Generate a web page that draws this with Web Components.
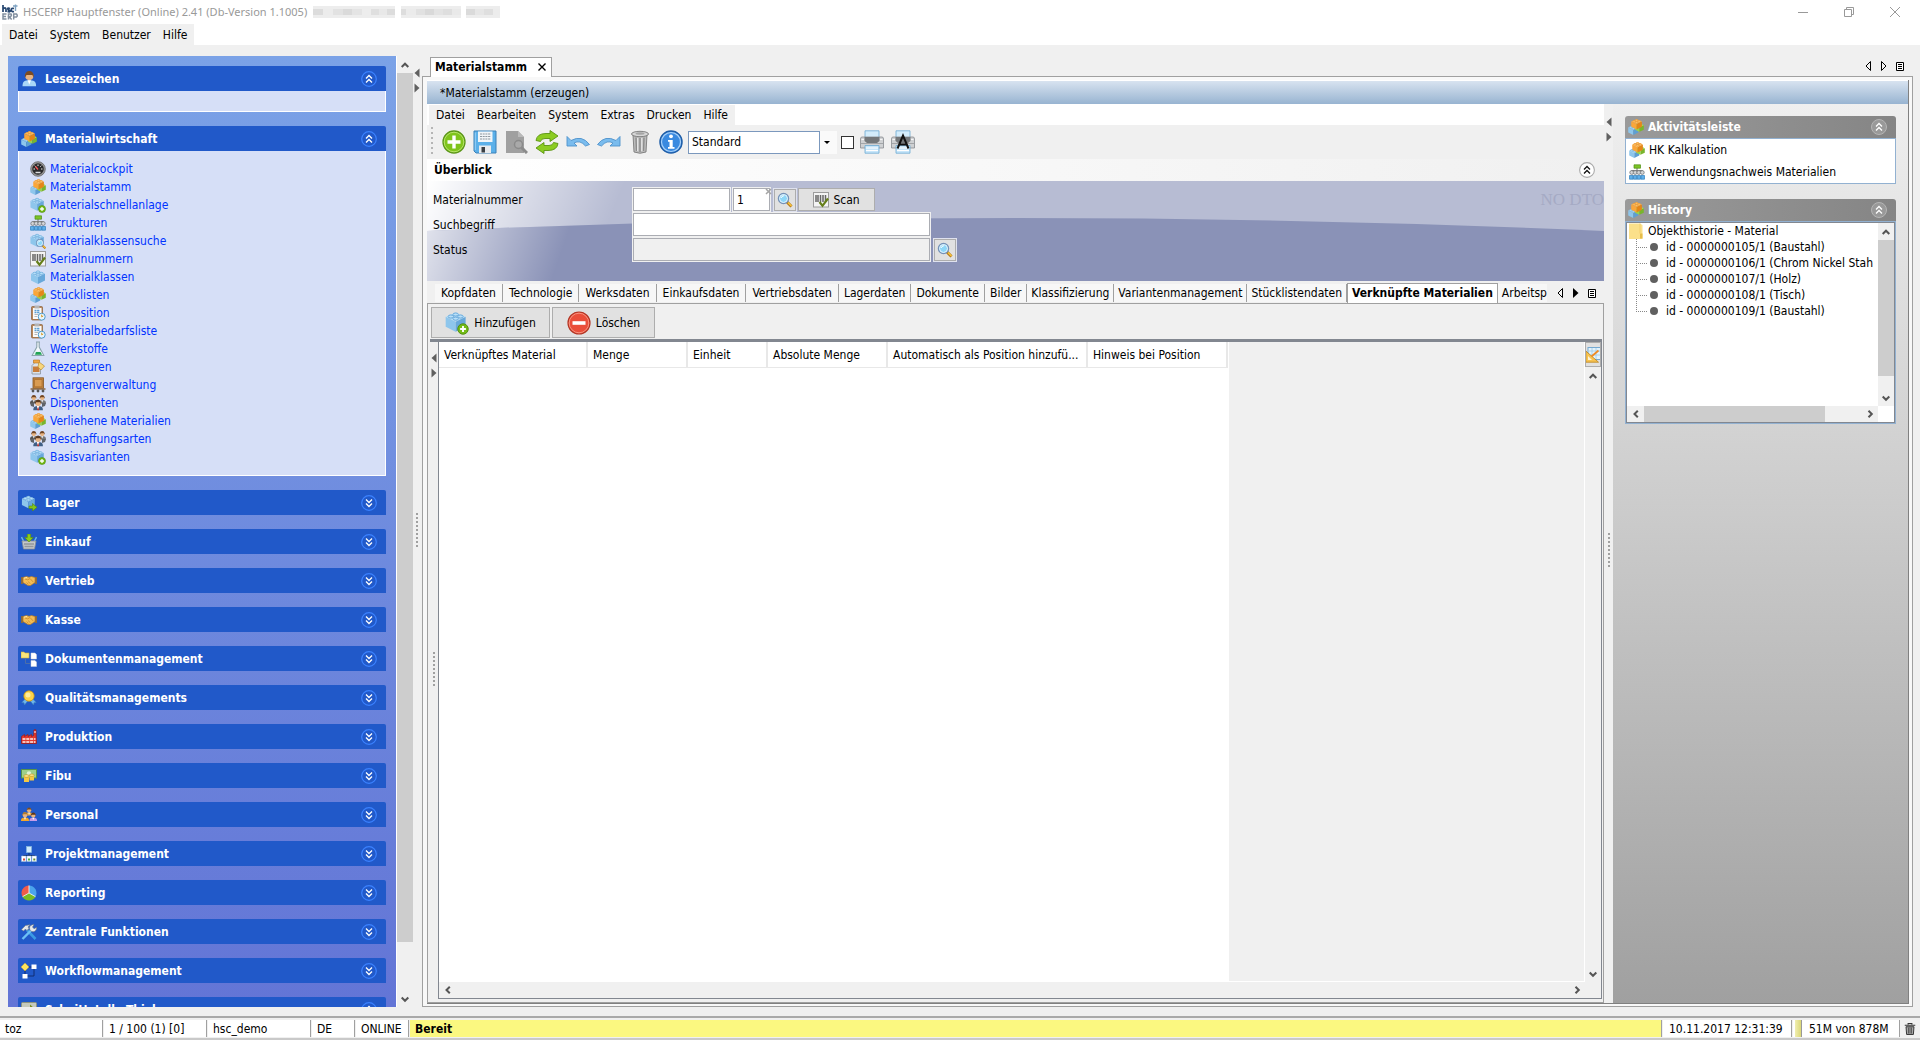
<!DOCTYPE html>
<html lang="de">
<head>
<meta charset="utf-8">
<title>HSCERP Hauptfenster</title>
<style>
html, body { margin: 0; height: 100%; }
body { font: 12px/16px "DejaVu Sans Condensed", "DejaVu Sans", sans-serif; color: #000; background: #f0f0f0; overflow: hidden; }
</style>
</head>
<body>
<erp-app></erp-app>
<script>
const brick = (t, l, r, x, y, s) => `<g transform="translate(${x} ${y}) scale(${s})">
<path d="M8 1.500 15 4.500 8 8 1 4.500Z" fill="${t}"/><path d="M1 4.500 8 8V15L1 11.500Z" fill="${l}"/><path d="M15 4.500 8 8V15L15 11.500Z" fill="${r}"/>
<ellipse cx="8" cy="3" rx="1.900" ry="1.100" fill="${t}" stroke="${r}" stroke-width=".7"/><ellipse cx="4.600" cy="4.400" rx="1.900" ry="1.100" fill="${t}" stroke="${r}" stroke-width=".7"/><ellipse cx="11.400" cy="4.400" rx="1.900" ry="1.100" fill="${t}" stroke="${r}" stroke-width=".7"/><ellipse cx="8" cy="5.900" rx="1.900" ry="1.100" fill="${t}" stroke="${r}" stroke-width=".7"/></g>`;
const blue = (x = 0, y = 0, s = 1) => brick('#b9e0f8', '#8ec6ec', '#68a8da', x, y, s);
const plus = (x, y, r) => `<circle cx="${x}" cy="${y}" r="${r}" fill="#74bb17" stroke="#4b8a0c" stroke-width="${r / 6}"/><path d="M${x - r * .55} ${y}H${x + r * .55}M${x} ${y - r * .55}V${y + r * .55}" stroke="#fff" stroke-width="${r * .36}"/>`;
const man = (x, y, hair, coat, s) => `<g transform="translate(${x} ${y}) scale(${s})"><path d="M0 9C0 6 1.500 5.500 4 5.500S8 6 8 9Z" fill="${coat}"/><circle cx="4" cy="3" r="2.400" fill="#e7b483"/><path d="M1.400 4V2.400Q2 0 4 0T6.600 2.400V4L5.800 2.300H2.400Z" fill="${hair}"/><path d="M3 5.500H5L4 8Z" fill="#fff"/></g>`;
const lens = (x, y, s) => `<g transform="translate(${x} ${y}) scale(${s})"><path d="m9.500 9.500 5 5" stroke="#b27718" stroke-width="3"/><path d="m11 10.500 3.500 3.500" stroke="#f8c63c" stroke-width="1.500"/><circle cx="6.500" cy="6.500" r="5" fill="#8ed6f7" stroke="#7592b8" stroke-width="1.500"/><circle cx="6.500" cy="6.500" r="4" fill="none" stroke="#e9f7fe"/><path d="M4 6Q4.500 4 7 3.700" stroke="#fff" fill="none"/></g>`;
const clip = `<rect x="1.500" y="1.500" width="11" height="13.500" rx="1" fill="#b8865a" stroke="#8a6038" stroke-width=".7"/><rect x="3" y="3" width="8.500" height="11" fill="#fbfbfb"/><rect x="4.500" y=".5" width="5" height="3" fill="#b5b5b5"/><path d="M4.500 5.500H10M4.500 7.500H10" stroke="#5d9fd4" stroke-width="1.300" stroke-dasharray="2 .6"/><path d="M4.500 9.500H8M4.500 11.500H7" stroke="#aaa" stroke-width=".8"/><circle cx="11.700" cy="11.700" r="3.500" fill="#e9f5fc" stroke="#4d9aca"/><path d="M11.700 9.700V11.900L13.200 11" fill="none" stroke="#d79b25"/>`;
const group = `${man(0, 0, '#6f4423', '#555', .95)}${man(8.400, 0, '#6f4423', '#777', .95)}<path d="M0 8H4V12L1 11ZM12 8H16L15 11 12 12Z" fill="#5f6368"/>${man(3.300, 4.500, '#5b3a20', '#3f5f85', 1.200)}<path d="M6.800 11H9.300L8.100 15.500Z" fill="#fff"/><path d="m8.100 11.500.8 3-.8 1.200-.8-1.200Z" fill="#c92c22"/>`;
const shake = `<path d="M0 4H2V11H0ZM14 4H16V11H14Z" fill="#8b6a3e"/><path d="M2 4.500 5.500 3.500 8 4.300 10.500 3.500 14 4.500V9.500L9.500 12.500H7L2 9.500Z" fill="#f4bd55" stroke="#b77a25" stroke-width=".7"/><path d="M4 6Q7 8 9 5.500L12.500 9.300M5.500 9.500 7.500 11.300M7 8.500 9.500 10.800" fill="none" stroke="#c98a30" stroke-width=".8"/><path d="M3 5.200 6 4.400" stroke="#fde5a6"/>`;
const tree = `<path d="M8 4V8M2.500 8V6.500H13.500V8" fill="none" stroke="#777"/><path d="M5 .8H11.500V4.200H5Z" fill="#7cc427" stroke="#4f8e12" stroke-width=".7"/><g fill="#d4d6d8" stroke="#74787c" stroke-width=".8"><circle cx="2.700" cy="8.500" r="1.900"/><circle cx="6.200" cy="8.500" r="1.900"/><circle cx="9.800" cy="8.500" r="1.900"/><circle cx="13.300" cy="8.500" r="1.900"/></g><g fill="#5eaee8" stroke="#2e7fbd" stroke-width=".7"><path d="M.5 11.500H4V15.200H.5ZM4.500 11.500H7.800V15.200H4.500ZM8.200 11.500H11.500V15.200H8.200ZM12 11.500H15.500V15.200H12Z"/></g>`;
const bricks = `${brick('#b9e0f8', '#8ec6ec', '#5e9fd2', -.5, 5.200, .72)}${brick('#c9ec7b', '#9bd447', '#79b52d', 6.500, 3.500, .62)}${brick('#ffcb78', '#faa63a', '#e48619', 2.500, -1, .76)}`;
const barcode = `<rect x=".5" y=".5" width="15" height="14.500" fill="#f4f4f4" stroke="#9c9c9c"/><path d="M3 3V10M5 3V10M7.500 3V10M10 3V10M12.500 3V10" stroke="#666" stroke-width="1.500"/><path d="M6.500 10 9.500 13.800 15 6.500" fill="none" stroke="#667f1a" stroke-width="2.200"/>`;
const printer = `<path d="M5 .8H19V8H5Z" fill="#d3ecfb" stroke="#6ca9d2" stroke-width=".8"/><path d="M2 7H22Q23.500 7 23.500 9V18H.5V9Q.5 7 2 7Z" fill="#cfd1d3" stroke="#888c90" stroke-width=".8"/><path d="M4.500 7H19.500V11L17 13H7L4.500 11Z" fill="#73777a"/><path d="M1 13.500H23" stroke="#a2a5a8"/><path d="M1.500 9.500H4M20 9.500H22.500" stroke="#f5f5f5"/><path d="M5 15.500H19V23.200H5Z" fill="#c8e6fa" stroke="#6ca9d2" stroke-width=".8"/><path d="M6 18H18M6 20.500H18" stroke="#fff"/>`;
const chev = (d, c) => `<path d="${d === 'up' ? 'm5 7.500 3-3 3 3M5 11.500l3-3 3 3' : 'm5 4.500 3 3 3-3M5 8.500l3 3 3-3'}" fill="none" stroke="${c}" stroke-width="1.300"/>`;
const ICONS = {
 logo: [16, `<rect width="16" height="16" fill="#fff"/><path d="M1 1V8M1.500 4.500Q4 3 4 5.500V8M8 4.500Q5.500 3.500 5.800 5T8.200 6.500Q8.500 8.500 5.500 7.500M12 4.500Q9 3.800 9.300 6T12 7.500" fill="none" stroke="#25456f" stroke-width="1.700"/><path d="M11 2H15.500M13.500 .5V7" stroke="#7fa3c2" stroke-width="1.400"/><path d="M4.500 10H1V15H4.500M1 12.500H4M6.500 15.500V10H9Q10 11.500 8.500 12.700H7L9.700 15.500M11.700 15.500V10H14.500Q16 11.800 14.500 13H12" fill="none" stroke="#8390a0" stroke-width="1.500"/>`],
 user: [16, man(1.500, 0, '#7b4b22', '#a9d6f7', 1.700)],
 bricks: [16, bricks],
 gauge: [16, `<circle cx="8" cy="8" r="7.300" fill="#999" stroke="#666" stroke-width=".8"/><circle cx="8" cy="8" r="5.800" fill="#2b2b2b"/><path d="M3.500 8H5M4.700 4.700 5.700 5.700M8 3.500V5M11.300 4.700 10.300 5.700M12.500 8H11" stroke="#eee"/><path d="M8 8.500 5.500 5.500" stroke="#f55" stroke-width="1.200"/><path d="M5.500 11.500H10.500" stroke="#ddd" stroke-width="1.500"/>`],
 brickadd: [16, blue(-.5, -.5, .95) + plus(12, 12, 3.500)],
 bricksearch: [16, blue(-.5, -.5, .95) + lens(5.500, 5.500, .68)],
 tree: [16, tree], barcode: [16, barcode], brick: [16, blue()], clip: [16, clip],
 flask: [16, `<path d="M6 1H10M6.800 1V6L2.200 14.500H13.800L9.200 6V1" fill="#f2f8fb" stroke="#8ca3ad" stroke-width="1.100"/><path d="M5 10.500H11L13 14H3Z" fill="#dceef0"/><path d="M6 11H10.500L12 13.800H5Z" fill="#23a455"/>`],
 bottle: [16, `<path d="M4 1.500H9V4.500L10.500 6.500V15H2V6.500L4 4.500Z" fill="#dde3e8" stroke="#8a929a" stroke-width=".8"/><path d="M3.500 1H9.500V4H3.500Z" fill="#efa745" stroke="#bb761e" stroke-width=".6"/><path d="M3 7.500H9.500V13H3Z" fill="#c97d3a"/><path d="M9 3 14.500 7 11 11 8 8Z" fill="#f8d67c" stroke="#b98c35" stroke-width=".7"/>`],
 crate: [16, `<rect x="3" y=".8" width="10.500" height="10.500" fill="#c1843f" stroke="#875622" stroke-width=".8"/><path d="M4.500 2.500H12V9.800H4.500Z" fill="#d99b52" stroke="#a66b2c" stroke-width=".7"/><path d="M.5 12H15.500" stroke="#8f6a43" stroke-width="1.500"/><circle cx="3" cy="14" r="1.400" fill="#555"/><circle cx="8" cy="14" r="1.400" fill="#555"/><circle cx="13" cy="14" r="1.400" fill="#555"/>`],
 people: [16, group],
 brickgo: [16, blue(0, -.5, .92) + `<path d="M8 11H11.500V8.500L16 12.300 11.500 16V13.500H8Z" fill="#84c51b" stroke="#55880d" stroke-width=".6"/>`],
 basket: [16, `<path d="M.5 3 3 8M15.500 3 13 8" stroke="#67b5e4" stroke-width="1.500"/><path d="M1 7H15L13.500 15H2.500Z" fill="#c3c7ca" stroke="#8b9094" stroke-width=".8"/><path d="M3 10H13M3.500 12.500H12.500" stroke="#92979b" stroke-width="1.500"/><path d="M6.300 0H9.700V3.500H12.300L8 8 3.700 3.500H6.300Z" fill="#8dcc1c" stroke="#578c0a" stroke-width=".6"/>`],
 shake: [16, shake],
 docs: [16, `<path d="M0 1H3L4 2H8V7H0Z" fill="#fbe57b" stroke="#cfae3c" stroke-width=".6"/><path d="M4.500 8V12.500H9M8.500 5.500H9.500" fill="none" stroke="#4c6ea8"/><path d="M10 2H14L15.500 3.500V8H10ZM10 9.500H14L15.500 11V15.500H10Z" fill="#fff" stroke="#cdd3dc" stroke-width=".5"/>`],
 medal: [16, `<path d="M5 8 .8 12.500 3 12.800 3.500 15 7.500 10ZM11 8 15.200 12.500 13 12.800 12.500 15 8.500 10Z" fill="#6db4ec" stroke="#3c80c0" stroke-width=".6"/><circle cx="8" cy="6" r="5.200" fill="#fbd34a" stroke="#c99516" stroke-width=".8"/><circle cx="7" cy="5" r="2.500" fill="#fdec9d"/>`],
 factory: [16, `<path d="M.5 14.500V7.500L3.500 5.500V7.500L7 5.500V7.500L10.500 5.500V7.500L12.700 6.500 13 .8H15L15.500 14.500Z" fill="#e33a2f" stroke="#a31710" stroke-width=".7"/><path d="M1.500 10H14.500M1.500 13H14.500" stroke="#f7c3bd" stroke-width="1.800" stroke-dasharray="3 .8"/><path d="M13 3H15" stroke="#fff"/>`],
 money: [16, `<rect x=".5" y="1.500" width="15" height="8.500" fill="#9ed08b" stroke="#55924a"/><circle cx="8" cy="5.500" r="2.300" fill="#dff1d2"/><path d="M3 8H8V14H3Z" fill="#f6c842"/><ellipse cx="5.500" cy="8" rx="2.800" ry="1.300" fill="#ffe88e" stroke="#b98d19" stroke-width=".6"/><path d="M8.500 7H13V12.500H8.500Z" fill="#f6c842"/><ellipse cx="10.800" cy="7.200" rx="2.500" ry="1.200" fill="#ffe88e" stroke="#b98d19" stroke-width=".6"/>`],
 staff: [16, `${man(4.500, .5, '#7b4b22', '#e9b054', .9)}${man(0, 5, '#b07b30', '#f5a728', 1)}${man(8.500, 5.500, '#5b351b', '#c79be8', .95)}`],
 project: [16, `<path d="M8 6V9.500M2.500 11V9.500H13.500V11" fill="none" stroke="#12306e"/><rect x="5.500" y=".5" width="5" height="6" fill="#cfeafc" stroke="#86b9de" stroke-width=".7"/><path d="M.5 10H5V15.500H.5ZM5.800 10H10.200V15.500H5.800ZM11 10H15.500V15.500H11Z" fill="#fff" stroke="#9fc0dd" stroke-width=".5"/><path d="M2 12.500H4V14.500H2Z" fill="#d34b3c"/><path d="M7 12.500H9V14.500H7Z" fill="#4bb13f"/><path d="M12.300 12.500H14.300V14.500H12.300Z" fill="#5d8d2f"/>`],
 pie: [16, `<path d="M8 8V.5A7.500 7.500 0 0 0 1.500 11.700Z" fill="#ef5b4a"/><path d="M8 8V.5A7.500 7.500 0 0 1 14.500 11.700Z" fill="#4ba4ec"/><path d="M8 8 1.500 11.700A7.500 7.500 0 0 0 14.500 11.700Z" fill="#79bc26"/><path d="M8 8V.5M8 8 1.500 11.700M8 8 14.500 11.700" stroke="#fff" stroke-width=".8"/>`],
 tools: [16, `<path d="M14.500 15 6 6" stroke="#3a9ae4" stroke-width="2.600"/><path d="M.5 5.500 4.500 1.500 9 .8 7 3 8 4.500 5.800 6.500 4.500 5 2.500 7Z" fill="#e4e7ea" stroke="#73787d" stroke-width=".6"/><path d="M1.500 15 11 5.500" stroke="#6ec1f5" stroke-width="2.400"/><path d="M15.500 3.500A3.500 3.500 0 1 1 13 .8L11.500 3 13 4.700Z" fill="#e8ebee" stroke="#73787d" stroke-width=".6"/>`],
 flow: [16, `<path d="M7 4H11M13 6V13H6M4 7V11" fill="none" stroke="#10286a" stroke-width=".9"/><path d="M4 0 8 4 4 8 0 4Z" fill="#fbe35d" stroke="#c7a52b" stroke-width=".5"/><path d="M10.500 1.500H15.500V6H10.500ZM1.500 11H6.500V15.500H1.500Z" fill="#fff"/>`],
 port: [16, `<rect x=".5" y=".5" width="15" height="15" rx="1" fill="#c6cabc" stroke="#8e937f"/><path d="M3 5H9V2.500L14 7 9 12V9H3Z" fill="#7d8f1f"/>`],
 add: [24, `<circle cx="12" cy="12" r="11" fill="#7fc41c" stroke="#5c961a" stroke-width="1.300"/><circle cx="12" cy="12" r="9.800" fill="none" stroke="#b6e36b"/><path d="M5.500 12H18.500M12 5.500V18.500" stroke="#fff" stroke-width="3.400"/>`],
 remove: [24, `<circle cx="12" cy="12" r="11" fill="#ea4e3a" stroke="#b23625" stroke-width="1.200"/><circle cx="12" cy="12" r="9.800" fill="none" stroke="#f8927f"/><path d="M5.500 12H18.500" stroke="#fff" stroke-width="3.600"/>`],
 save: [24, `<path d="M1 1H23V23H3L1 21Z" fill="#5bb0e9" stroke="#3b80b8"/><path d="M5 1.500H19.500V12H5Z" fill="#f1f5f8"/><path d="M7 4H18M7 6.500H18M7 9H18" stroke="#8d979f" stroke-dasharray="2 .7"/><path d="M6 15.500H18V23H6Z" fill="#e8ebee"/><path d="M8.500 17H12V22.500H8.500Z" fill="#3a3f44"/><path d="M2.300 2.500V20" stroke="#9ad0f5"/>`],
 docsearch: [24, `<path d="M2 1H14L20 7V23H2Z" fill="#a0a0a0"/><path d="M14 1V7H20Z" fill="#bababa"/><circle cx="14.500" cy="14.500" r="4" fill="#a9a9a9" stroke="#8a8a8a" stroke-width="1.500"/><path d="m17.500 17.500 5.500 5.500" stroke="#8b8b8b" stroke-width="3"/>`],
 refresh: [24, `<path d="M1 10.500Q2 3.500 11 3.500H15V.5L23 6 15 11.500V8.500H10Q6 8.500 5.500 11.500Z" fill="#8ccc22" stroke="#5a9410" stroke-width=".9"/><path d="M23 13.500Q22 20.500 13 20.500H9V23.500L1 18 9 12.500V15.500H14Q18 15.500 18.500 12.500Z" fill="#8ccc22" stroke="#5a9410" stroke-width=".9"/>`],
 undo: [24, `<path d="M1 6.500V16H11L8 13Q14 9.500 19.500 16L23.500 14.500Q16 4.500 5 10.500Z" fill="#7abcee" stroke="#4f92cb" stroke-width=".9"/>`],
 redo: [24, `<path d="M23 6.500V16H13L16 13Q10 9.500 4.500 16L.5 14.500Q8 4.500 19 10.500Z" fill="#7abcee" stroke="#4f92cb" stroke-width=".9"/>`],
 bin: [24, `<path d="M5 4.500 6 22Q12 24.500 18 22L19 4.500Z" fill="#bcbcbc" stroke="#7a7a7a" stroke-width=".9"/><path d="M8 7.500 8.500 21M12 8V22M16 7.500 15.500 21" stroke="#8c8c8c" stroke-width="1.400"/><path d="M9.700 8V21M13.800 8V21" stroke="#eee"/><ellipse cx="12" cy="4" rx="8.500" ry="2.700" fill="#d6d6d6" stroke="#777" stroke-width=".9"/><ellipse cx="12" cy="3.500" rx="4.500" ry="1.200" fill="#a5a5a5"/>`],
 info: [24, `<circle cx="12" cy="12" r="11" fill="#3a8ae0" stroke="#1f5ea8" stroke-width="1.500"/><circle cx="12" cy="12" r="9.500" fill="none" stroke="#a9d1f8" stroke-width="1.200"/><circle cx="12" cy="6.300" r="1.900" fill="#fff"/><path d="M9 10H13.700V17H15.500V18.800H9V17H10.500V11.700H9Z" fill="#fff"/>`],
 printer: [24, printer],
 printera: [24, printer + `<path d="m6.500 18.500 5.500-13 5.500 13M8.500 14.500H15.500" fill="none" stroke="#111" stroke-width="2"/>`],
 lens: [16, lens(0, 0, 1)],
 table: [16, `<rect x="3" y=".5" width="12.500" height="12" fill="#e2f2fc" stroke="#75a9d1"/><path d="M3.500 4H15M3.500 8H15M7 1V12M11 1V12" stroke="#9fcbe8" stroke-width=".8"/><path d="M.8 4V15.200H13.500Z" fill="#f8c452" stroke="#bb8119" stroke-width=".8"/><path d="M3 9V13H7Z" fill="#fdf3d6"/><path d="m6.500 9.500 7-6" stroke="#ef8b25" stroke-width="1.800"/>`],
 folder: [16, `<path d="M1 .5H12L14.500 2V16H1Z" fill="#fbe08a"/><path d="M12 10.500H14.500V15.500H12Z" fill="#e6bd4a"/><path d="M12 .5V10.500" stroke="#f2cf6c"/>`],
 trash: [16, `<path d="M5.500 2V.7H10.500V2M1 3H15" fill="none" stroke="#333" stroke-width="1.500"/><path d="M2.700 5H13.300L12.500 15.300H3.500Z" fill="#a5a5a5" stroke="#333" stroke-width="1.300"/><path d="M6 6V14M8 6V14M10 6V14" stroke="#444"/>`],
 bup: [16, `<circle cx="8" cy="8" r="7.300" fill="none" stroke="#3b82ff" stroke-width="1.200"/>` + chev('up', '#fff')],
 bdown: [16, `<circle cx="8" cy="8" r="7.300" fill="none" stroke="#3b82ff" stroke-width="1.200"/>` + chev('down', '#fff')],
 gup: [16, `<circle cx="8" cy="8" r="7.500" fill="#999" stroke="#b5b5b5"/>` + chev('up', '#fff')],
 wup: [16, `<rect x=".6" y=".6" width="14.800" height="14.800" rx="7.400" fill="#fff" stroke="#aaa" stroke-width="1.100"/>` + chev('up', '#111')],
 min: [16, `<path d="M3 8.500H13" stroke="#999"/>`],
 max: [16, `<path d="M3.500 5.500H10.500V12.500H3.500ZM5.500 5.500V3.500H12.500V10.500H10.500" fill="none" stroke="#999"/>`],
 close: [16, `<path d="m3 3 10 10M13 3 3 13" stroke="#999"/>`],
 x: [16, `<path d="m4.500 4.500 7 7M11.500 4.500l-7 7" stroke="#000" stroke-width="1.400"/>`],
 left: [16, `<path d="M10.500 3.500V12.500L6 8Z" fill="#f5f5f5" stroke="#000"/>`],
 right: [16, `<path d="M5.500 3.500V12.500L10 8Z" fill="#f5f5f5" stroke="#000"/>`],
 rightfill: [16, `<path d="M5 3V13L10.500 8Z" fill="#000"/>`],
 list: [16, `<path d="M4.500 4.500H11.500V12.500H4.500Z" fill="#fff" stroke="#000"/><path d="M6 6.500H10M6 8.500H10M6 10.500H10" stroke="#000"/>`],
 up: [16, `<path d="m4.700 10 3.300-3.300L11.300 10" fill="none" stroke="#555" stroke-width="2"/>`],
 down: [16, `<path d="M4.700 6.500 8 9.800 11.300 6.500" fill="none" stroke="#555" stroke-width="2"/>`],
 prev: [16, `<path d="M9.800 4.700 6.500 8 9.800 11.300" fill="none" stroke="#555" stroke-width="2"/>`],
 next: [16, `<path d="M6.500 4.700 9.800 8 6.500 11.300" fill="none" stroke="#555" stroke-width="2"/>`],
 tril: [10, `<path d="M7.500 .5V9.500L2.500 5Z" fill="#606060"/>`],
 trir: [10, `<path d="M2.500 .5V9.500L7.500 5Z" fill="#606060"/>`]
};
const icon = (n, s = 16) => `<erp-icon name="${n}" size="${s}"></erp-icon>`;
function define(name, css, html) {
  customElements.define(name, class extends HTMLElement {
    connectedCallback() {
      if (this.shadowRoot) return;
      const markup = typeof html === 'function' ? html(this) : html;
      const t = document.createElement('template');
      t.innerHTML = `<style>*{box-sizing:border-box}:host{display:block}button,input,select{font:inherit;color:inherit;margin:0;padding:0;border:0;border-radius:0;background:none}button{display:inline-flex;align-items:center}ul{list-style:none;margin:0;padding:0}${css}</style>${markup}`;
      this.attachShadow({ mode: 'open' }).append(t.content.cloneNode(true));
    }
  });
}

define('erp-icon', ':host{display:block;flex:none}svg{display:block}', el => {
  const [box, art] = ICONS[el.getAttribute('name')];
  const s = el.getAttribute('size') || 16;
  return `<svg width="${s}" height="${s}" viewBox="0 0 ${box} ${box}" aria-hidden="true">${art}</svg>`;
});

define('erp-scrollbar', `
:host{display:flex;flex:none;background:#f0f0f0;width:16px;flex-direction:column}
:host([horizontal]){width:auto;height:16px;flex-direction:row}
button{width:16px;height:17px;justify-content:center;flex:none}
:host([horizontal]) button{width:17px;height:16px}
.track{flex:1;display:flex;flex-direction:inherit;min-width:0;min-height:0}
.thumb{background:#cdcdcd;flex:var(--thumb,0) 0 0px}
.rest{flex:var(--rest,1) 0 0px}`, el => {
  const h = el.hasAttribute('horizontal');
  return `<button aria-label="zurück">${icon(h ? 'prev' : 'up')}</button><div class="track"><div class="thumb"></div><div class="rest"></div></div><button aria-label="weiter">${icon(h ? 'next' : 'down')}</button>`;
});

define('erp-splitter', `
:host{display:flex;flex-direction:column;align-items:center;flex:none;width:10px;position:relative}
button{height:15px;width:10px}
.grip{position:absolute;top:var(--grip,50%);width:2px;height:35px;background:repeating-linear-gradient(#a0a0a0 0 2px,transparent 2px 4px)}`,
`<button aria-label="Einklappen">${icon('tril', 10)}</button><button aria-label="Ausklappen">${icon('trir', 10)}</button><div class="grip"></div>`);

define('erp-menu', `
:host{display:flex;background:#fff;height:21px}
nav{display:flex;background:#f0f0f0;padding:0 1px}
button{padding:0 6px;height:100%}`,
  el => `<nav>${el.getAttribute('items').split(',').map(t => `<button>${t}</button>`).join('')}</nav>`);

define('erp-titlebar', `
:host{display:flex;align-items:center;background:#fff;color:#999;height:24px;padding:0 17px 0 2px}
span{margin-left:5px;font:11px/16px "Noto Sans","Open Sans",sans-serif}
.rest{margin-left:6px;flex:1}
.win{display:flex;gap:30px}`,
`${icon('logo')}<span>HSCERP Hauptfenster (Online) 2.41 (Db-Version 1.1005)</span>
<svg class="rest" height="14" aria-hidden="true">${[[0, 10, '#dcdcdc'], [10, 10, '#ececec'], [20, 10, '#e2e2e2'], [30, 9, '#dadada'], [39, 10, '#e4e4e4'], [49, 9, '#ededed'], [58, 8, '#dfdfdf'], [66, 8, '#e8e8e8'], [74, 8, '#dcdcdc'], [88, 5, '#ddd'], [93, 10, '#ebebeb'], [103, 9, '#e1e1e1'], [112, 9, '#d9d9d9'], [121, 9, '#e3e3e3'], [130, 9, '#dedede'], [139, 9, '#e9e9e9'], [153, 9, '#dadada'], [162, 9, '#e6e6e6'], [171, 9, '#dfdfdf'], [180, 7, '#ececec']].map(([x, w, c]) => `<rect x="${x}" y="1" width="${w}" height="12" fill="#ededed"/><rect x="${x}" y="4" width="${w}" height="6" fill="${c}"/>`).join('')}</svg>
<div class="win"><button aria-label="Minimieren">${icon('min')}</button><button aria-label="Wiederherstellen">${icon('max')}</button><button aria-label="Schließen">${icon('close')}</button></div>`);

define('task-group', `
:host{flex:none}
header{display:flex;align-items:center;height:25px;background:#2159c9;color:#fff;font-weight:bold;padding:0 9px 0 3px;border-radius:2px 2px 0 0}
h2{font:inherit;margin:0 0 0 8px;flex:1}
.body{border:1px solid #fff;border-top:0;background:#d6dff7;min-height:21px}`,
  el => `<header>${icon(el.getAttribute('icon'))}<h2>${el.getAttribute('label')}</h2><button aria-label="Umschalten">${icon(el.hasAttribute('open') ? 'bup' : 'bdown')}</button></header>${el.hasAttribute('open') ? '<div class="body"><slot></slot></div>' : ''}`);

define('task-links', `
ul{padding:9px 0 9px 11px}
a{display:flex;align-items:center;gap:4px;height:18px;color:#0033ff;text-decoration:none}`,
`<ul>${[['gauge', 'Materialcockpit'], ['bricks', 'Materialstamm'], ['brickadd', 'Materialschnellanlage'], ['tree', 'Strukturen'], ['bricksearch', 'Materialklassensuche'], ['barcode', 'Serialnummern'], ['brick', 'Materialklassen'], ['bricks', 'Stücklisten'], ['clip', 'Disposition'], ['clip', 'Materialbedarfsliste'], ['flask', 'Werkstoffe'], ['bottle', 'Rezepturen'], ['crate', 'Chargenverwaltung'], ['people', 'Disponenten'], ['bricks', 'Verliehene Materialien'], ['people', 'Beschaffungsarten'], ['brickadd', 'Basisvarianten']].map(([i, t]) => `<li><a href="#">${icon(i)}${t}</a></li>`).join('')}</ul>`);

define('task-bar', `
:host{display:flex;width:405px;flex:none;min-height:0}
.groups{flex:1;display:flex;flex-direction:column;gap:14px;padding:10px;background:linear-gradient(#7ba2e7,#6375d6);border-right:1px solid #fff;overflow:hidden}
erp-scrollbar{--thumb:869;--rest:48}`,
`<div class="groups"><task-group icon="user" label="Lesezeichen" open></task-group>
<task-group icon="bricks" label="Materialwirtschaft" open><task-links></task-links></task-group>
${[['brickgo', 'Lager'], ['basket', 'Einkauf'], ['shake', 'Vertrieb'], ['shake', 'Kasse'], ['docs', 'Dokumentenmanagement'], ['medal', 'Qualitätsmanagements'], ['factory', 'Produktion'], ['money', 'Fibu'], ['staff', 'Personal'], ['project', 'Projektmanagement'], ['pie', 'Reporting'], ['tools', 'Zentrale Funktionen'], ['flow', 'Workflowmanagement']].map(([i, t]) => `<task-group icon="${i}" label="${t}"></task-group>`).join('')}
<task-group icon="port" label="Schnittstelle Thiel" open></task-group></div><erp-scrollbar></erp-scrollbar>`);

define('erp-toolbar', `
:host{display:flex;align-items:center;height:34px;padding-left:4px}
.grip{width:2px;height:30px;background:repeating-linear-gradient(#b5b5b5 0 2px,transparent 2px 5px)}
.tools{display:flex;gap:7px;margin:0 5px 0 9px}
.tools.print{margin:0 0 0 6px}
.combo{display:flex;height:23px;width:149px;position:relative}
select{appearance:none;width:100%;background:linear-gradient(#fff,#fff) 1px 1px/130px 21px no-repeat,linear-gradient(#7b98bd,#7b98bd) 0 0/132px 23px no-repeat,#fafafa;padding:0 20px 0 4px}
.combo i{position:absolute;right:7px;top:10px;border:3px solid transparent;border-top-color:#000;border-bottom:0}
input{appearance:none;width:13px;height:13px;border:1px solid #333;background:#fff;margin-left:4px}`,
`<div class="grip"></div><div class="tools">${[['add', 'Neu'], ['save', 'Speichern'], ['docsearch', 'Vorschau'], ['refresh', 'Aktualisieren'], ['undo', 'Rückgängig'], ['redo', 'Wiederholen'], ['bin', 'Löschen'], ['info', 'Info']].map(([i, t]) => `<button aria-label="${t}">${icon(i, 24)}</button>`).join('')}</div>
<div class="combo"><select aria-label="Ansicht"><option>Standard</option></select><i></i></div><input type="checkbox" aria-label="Auswahl">
<div class="tools print"><button aria-label="Drucken">${icon('printer', 24)}</button><button aria-label="Drucken Auto">${icon('printera', 24)}</button></div>`);

define('material-overview', `
.head{display:flex;align-items:center;justify-content:space-between;height:22px;padding:0 9px 0 7px;background:linear-gradient(90deg,#fff,#f0f0f0);font-weight:bold}
.form{display:grid;grid-template-columns:200px auto 1fr;grid-template-rows:repeat(3,25px);align-items:center;height:100px;padding:6px 0 0 6px;position:relative;background:#b7bcd3;isolation:isolate}
.bg{position:absolute;inset:0;width:100%;height:100%;z-index:-1}
.row{display:flex;align-items:center}
.row.span{grid-column:2/4}
.row input{height:23px;border:1px solid #abadb3;background:#fff;padding:0 3px;outline:1px solid #f0f0f0}
.num{width:97px;margin-right:3px}.rev{width:37px;margin-right:4px}.wide{width:297px;margin-right:4px}
.row input:disabled{background:#f0f0f0}
.lens{width:22px;height:22px;border:1px solid #adadad;background:#e1e1e1;justify-content:center;outline:1px solid #dfe2ee}
.scan{width:77px;height:23px;border:1px solid #adadad;background:#e1e1e1;justify-content:center;gap:4px;margin-left:2px}
.dto{grid-column:3;grid-row:1;justify-self:end;font:17px/20px "Liberation Serif",serif;color:#a5aac4}
.badge{position:relative;width:0}.badge svg{position:absolute;right:2px;top:-12px}`,
`<div class="head"><span>Überblick</span><button aria-label="Einklappen">${icon('wup')}</button></div>
<div class="form"><svg class="bg" viewBox="0 0 1177 100" preserveAspectRatio="none" aria-hidden="true"><defs><linearGradient id="a" gradientUnits="userSpaceOnUse" x1="0" y1="0" x2="170" y2="70"><stop stop-color="#fff"/><stop offset="1" stop-color="#fff" stop-opacity="0"/></linearGradient><linearGradient id="b" gradientUnits="userSpaceOnUse" x1="0" y1="40" x2="130" y2="85"><stop stop-color="#fff" stop-opacity=".75"/><stop offset="1" stop-color="#fff" stop-opacity="0"/></linearGradient></defs>
<path d="M0 0H1177V100H0Z" fill="#b7bcd3"/><path d="M0 0H1177V100H0Z" fill="url(#a)"/><path d="M0 50Q588 24 1177 50V100H0Z" fill="#8a92b7"/><path d="M0 50Q588 24 1177 50V100H0Z" fill="url(#b)"/></svg>
<label for="num">Materialnummer</label><div class="row"><input id="num" class="num"><input class="rev" value="1" aria-label="Revision"><span class="badge"><svg width="7" height="7" aria-hidden="true"><path d="m1 1 5 5M6 1 1 6" stroke="#a5a5a5" stroke-width="1.500"/></svg></span><button class="lens" aria-label="Suchen">${icon('lens')}</button><button class="scan">${icon('barcode')}Scan</button></div><span class="dto">NO DTO</span>
<label for="term">Suchbegriff</label><div class="row span"><input id="term" class="wide"></div>
<label for="state">Status</label><div class="row span"><input id="state" class="wide" disabled><button class="lens" aria-label="Status suchen">${icon('lens')}</button></div></div>`);

define('detail-tabs', `
:host{display:flex;align-items:flex-end;height:22px;padding:0 4px 0 8px}
.tabs{display:flex;flex:1;min-width:0;overflow:hidden;align-items:flex-end}
button{white-space:nowrap}
.tab{height:18px;padding:0 6px;border-right:1px solid #a0a0a0;background:#f7f7f7;flex:none;margin-bottom:1px}
.tab:nth-child(n+6){padding:0 5px}
.tab:nth-child(n+9){padding:0 4px}
.tab.on{height:20px;margin:0;padding-bottom:1px;font-weight:bold;border:1px solid #a0a0a0;border-bottom:0;background:#fff}
.tab.last{border:0;padding-right:0}
.nav{display:flex;margin-left:5px;height:21px;align-items:center}`,
`<div class="tabs">${['Kopfdaten', 'Technologie', 'Werksdaten', 'Einkaufsdaten', 'Vertriebsdaten', 'Lagerdaten', 'Dokumente', 'Bilder', 'Klassifizierung', 'Variantenmanagement', 'Stücklistendaten'].map(t => `<button class="tab">${t}</button>`).join('')}<button class="tab on">Verknüpfte Materialien</button><button class="tab last">Arbeitsp</button></div>
<div class="nav"><button aria-label="zurück">${icon('left')}</button><button aria-label="weiter">${icon('rightfill')}</button><button aria-label="Liste">${icon('list')}</button></div>`);

define('linked-materials', `
:host{display:flex;flex-direction:column;flex:1;min-height:0;border:1px solid #a0a0a0;padding:2px 1px 3px 2px}
.bar{display:flex;gap:2px;padding:1px 0 0 1px;height:33px}
.bar button{height:31px;border:1px solid #adadad;background:#e1e1e1;justify-content:center;gap:5px}
.add{width:119px}.del{width:103px}
.body{display:flex;flex:1;min-height:0;border-top:3px solid #828790}
.split{width:8px;padding-top:8px}
.grid{flex:1;display:flex;flex-direction:column;border:1px solid #828790;border-top:0;min-width:0}
.main{flex:1;display:flex;min-height:0}
.view{flex:1;min-width:0;border-right:1px solid #fff;border-bottom:1px solid #fff}
.sheet{width:790px;height:100%;background:#fff}
table{border-collapse:separate;border-spacing:0;table-layout:fixed;width:789px}
th{height:26px;padding:0 0 0 5px;font-weight:normal;text-align:left;background:#fff;border-right:2px solid #e8e8e8;border-bottom:1px solid #e8e8e8;white-space:nowrap;overflow:hidden}
.side{display:flex;flex-direction:column}
.side erp-scrollbar{flex:1}
.cfg{height:25px;width:16px;border:1px solid #adadad;background:#e1e1e1;justify-content:center;overflow:hidden}
.hs{margin-right:16px}`,
`<div class="bar"><button class="add">${icon('brickadd', 24)}Hinzufügen</button><button class="del">${icon('remove', 24)}Löschen</button></div>
<div class="body"><erp-splitter class="split" style="--grip:310px"></erp-splitter><div class="grid"><div class="main"><div class="view"><div class="sheet"><table><colgroup><col style="width:149px"><col style="width:100px"><col style="width:80px"><col style="width:120px"><col style="width:200px"><col style="width:140px"></colgroup><thead><tr>${['Verknüpftes Material', 'Menge', 'Einheit', 'Absolute Menge', 'Automatisch als Position hinzufü...', 'Hinweis bei Position'].map(t => `<th>${t}</th>`).join('')}</tr></thead><tbody></tbody></table></div></div><div class="side"><button class="cfg" aria-label="Spalten">${icon('table')}</button><erp-scrollbar></erp-scrollbar></div></div><erp-scrollbar class="hs" horizontal></erp-scrollbar></div></div>`);

define('side-panel', `
header{display:flex;align-items:center;height:22px;padding:0 9px 0 3px;border-radius:3px 3px 0 0;background:linear-gradient(90deg,#9a9a9a,#858585);color:#fff;font-weight:bold}
h2{font:inherit;margin:0 0 0 4px;flex:1}
.body{border:1px solid #92b1d1;background:#fff}`,
  el => `<header>${icon('bricks')}<h2>${el.getAttribute('label')}</h2><button aria-label="Umschalten">${icon('gup')}</button></header><div class="body"><slot></slot></div>`);

define('activity-list', `
a{display:flex;align-items:center;gap:4px;height:22px;padding-left:3px;color:#000;text-decoration:none}`,
`<a href="#">${icon('bricks')}HK Kalkulation</a><a href="#">${icon('tree')}Verwendungsnachweis Materialien</a>`);

define('history-tree', `
:host{border:1px solid #828790;height:201px;display:flex;flex-direction:column}
.main{flex:1;display:flex;min-height:0}
ul{white-space:nowrap}
.tree{flex:1;min-width:0;overflow:hidden}
.root,li{display:flex;align-items:center;height:16px}
.root{gap:4px;padding-left:1px}
.tree ul{margin-left:9px;background:repeating-linear-gradient(#888 0 1px,transparent 1px 2px) 0 0/1px 72px no-repeat}
li::before{content:"";width:12px;height:1px;background:repeating-linear-gradient(90deg,#888 0 1px,transparent 1px 2px)}
li i{width:8px;height:8px;border-radius:50%;background:#606060;margin:0 8px 0 2px}
.v{--thumb:136;--rest:13}
.h{margin-right:16px;--thumb:180;--rest:36}`,
`<div class="main"><div class="tree"><div class="root">${icon('folder')}Objekthistorie - Material</div><ul>${['105/1 (Baustahl)', '106/1 (Chrom Nickel Stah', '107/1 (Holz)', '108/1 (Tisch)', '109/1 (Baustahl)'].map(t => `<li><i></i>id - 0000000${t}</li>`).join('')}</ul></div><erp-scrollbar class="v"></erp-scrollbar></div><erp-scrollbar class="h" horizontal></erp-scrollbar>`);

define('erp-workspace', `
:host{display:flex;flex-direction:column;flex:1;min-width:0}
.tabs{display:flex;align-items:flex-end;justify-content:space-between;height:20px;padding:0 5px 0 8px}
.tab{display:flex;align-items:center;gap:7px;height:20px;border:1px solid #a0a0a0;border-bottom:0;background:#fff;padding:0 1px 2px 4px;font-weight:bold;position:relative;z-index:1;margin-bottom:-1px}
.nav{display:flex;padding-bottom:2px}
.frame{flex:1;min-height:0;border:1px solid #a0a0a0;padding:3px 3px 2px 4px;background:#f8f8f8;display:flex}
.inner{flex:1;min-width:0;display:flex;flex-direction:column;border:1px solid #808080;border-left:0;border-top:0;background:#f0f0f0}
.title{height:24px;flex:none;background:linear-gradient(#d8e3f0,#98b4d1);padding:4px 13px;border-top:1px solid #fff}
.cols{flex:1;display:flex;min-height:0}
.left{flex:1;min-width:0;display:flex;flex-direction:column}
.left erp-menu{padding-left:2px;border-top:1px solid #fff}
.split{width:9px;padding-top:10px}
.right{width:295px;flex:none;background:linear-gradient(#efefef,#a0a0a0);padding:12px;display:flex;flex-direction:column;gap:15px}`,
`<div class="tabs"><div class="tab">Materialstamm<button aria-label="Tab schließen">${icon('x')}</button></div><div class="nav"><button aria-label="zurück">${icon('left')}</button><button aria-label="weiter">${icon('right')}</button><button aria-label="Liste">${icon('list')}</button></div></div>
<div class="frame"><div class="inner"><div class="title">*Materialstamm (erzeugen)</div><div class="cols"><div class="left"><erp-menu items="Datei,Bearbeiten,System,Extras,Drucken,Hilfe"></erp-menu><erp-toolbar></erp-toolbar><material-overview></material-overview><detail-tabs></detail-tabs><linked-materials></linked-materials></div>
<erp-splitter class="split" style="--grip:429px"></erp-splitter>
<div class="right"><side-panel label="Aktivitätsleiste"><activity-list></activity-list></side-panel><side-panel label="History"><history-tree></history-tree></side-panel></div></div></div></div>`);

define('status-bar', `
:host{display:flex;height:24px;flex:none;border-top:2px solid #a9a9a9;border-bottom:2px solid #c9c9c9;background:#f0f0f0;padding:2px 0 1px}
div{display:flex;align-items:center;background:#fff;border-right:1px solid #a0a0a0;margin-right:1px;padding-left:5px;white-space:nowrap}
.msg{flex:1;background:#fbf880;font-weight:bold}
.date{width:129px;padding-left:6px}
.mem{width:107px;padding:0 0 0 2px}
.mem i{width:7px;height:100%;background:linear-gradient(90deg,#f0eeb0,#dcd878);border-right:1px solid #999;margin-right:7px}
.bin{background:none;border:0;margin:0;padding:0 4px 0 3px}`,
`<div style="width:103px">toz</div><div style="width:103px">1 / 100 (1) [0]</div><div style="width:103px">hsc_demo</div><div style="width:43px">DE</div><div style="width:53px">ONLINE</div><div class="msg">Bereit</div><div class="date">10.11.2017 12:31:39</div><div class="mem"><i></i>51M von 878M</div><div class="bin"><button aria-label="Speicher bereinigen">${icon('trash', 12)}</button></div>`);

define('erp-app', `
:host{display:flex;flex-direction:column;height:100vh}
.menu{padding-left:2px}
main{flex:1;min-height:0;display:flex;padding:11px 7px 9px 8px}
.split{margin-left:-1px;width:10px;padding-top:9px}`,
`<erp-titlebar></erp-titlebar><erp-menu class="menu" items="Datei,System,Benutzer,Hilfe"></erp-menu>
<main><task-bar></task-bar><erp-splitter class="split" style="--grip:457px"></erp-splitter><erp-workspace></erp-workspace></main><status-bar></status-bar>`);
</script>
</body>
</html>
